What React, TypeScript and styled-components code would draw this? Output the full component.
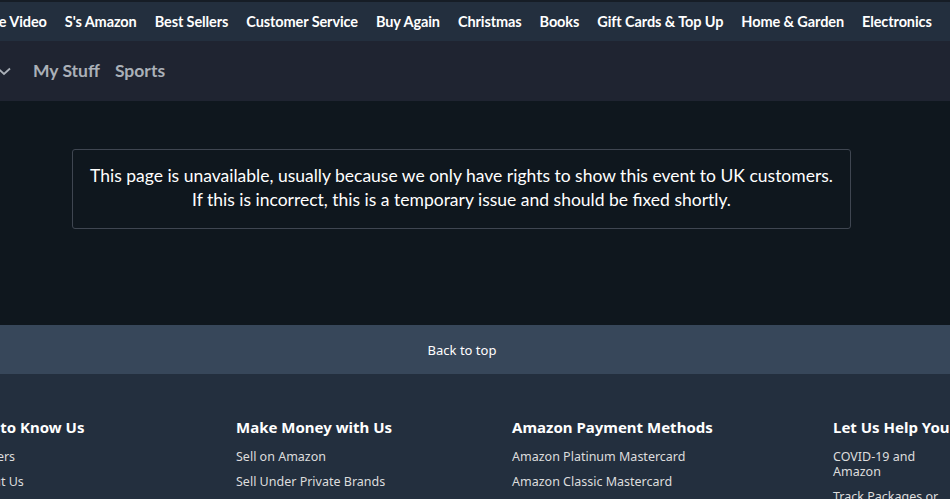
import React from "react";
import styled, { createGlobalStyle } from "styled-components";

const Global = createGlobalStyle`
  html, body { margin: 0; padding: 0; background: #232f3e; overflow: hidden; }
  body { font-family: "Lato", "Liberation Sans", sans-serif; width: 950px; height: 499px; }
`;

const Page = styled.div`
  width: 950px;
  height: 499px;
  overflow: hidden;
  display: flex;
  flex-direction: column;
`;

const TopStripe = styled.div`
  flex: none;
  height: 2px;
  background: #161d26;
`;

const NavBar = styled.nav`
  flex: none;
  height: 39px;
  background: #232f3e;
  display: flex;
  align-items: center;
  gap: 18px;
  margin-left: -31px;
  white-space: nowrap;
`;

const NavLink = styled.a`
  color: #ffffff;
  font-size: 14.5px;
  font-weight: 700;
  letter-spacing: -0.1px;
  text-decoration: none;
`;

const SubNav = styled.div`
  flex: none;
  height: 60px;
  background: #1f2431;
  display: flex;
  align-items: center;
  gap: 15px;
  margin-left: -3px;
  padding-bottom: 1px;
  box-sizing: border-box;
`;

const SubLink = styled.a`
  color: #aab0b8;
  font-size: 17.5px;
  font-weight: 700;
  text-decoration: none;
  display: flex;
  align-items: center;
`;

const Chevron = styled.svg`
  width: 14px;
  height: 14px;
  margin-right: 7px;
`;

const Main = styled.main`
  flex: none;
  height: 224px;
  background: #0f171e;
  display: flex;
  justify-content: center;
  align-items: flex-start;
  padding-top: 48px;
  box-sizing: border-box;
`;

const Notice = styled.div`
  width: 779px;
  height: 80px;
  box-sizing: border-box;
  border: 1px solid #3f4651;
  border-radius: 3px;
  margin-left: -27px;
  color: #ffffff;
  font-size: 17.5px;
  line-height: 24px;
  text-align: center;
  display: flex;
  flex-direction: column;
  justify-content: center;
  padding-bottom: 2px;
`;

const BackToTop = styled.div`
  flex: none;
  height: 49px;
  background: #37475a;
  color: #ffffff;
  font-family: "Noto Sans", "Liberation Sans", sans-serif;
  font-size: 13px;
  display: flex;
  align-items: center;
  justify-content: center;
  padding-right: 26px;
`;

const Footer = styled.footer`
  flex: 1;
  background: #232f3e;
  display: flex;
  align-items: flex-start;
  padding-top: 43px;
  margin-left: -30px;
  font-family: "Noto Sans", "Liberation Sans", sans-serif;
`;

const Column = styled.div<{ $w: number }>`
  width: ${(p) => p.$w}px;
  flex: none;
  display: flex;
  flex-direction: column;
`;

const ColTitle = styled.h3`
  margin: 0 0 12px;
  color: #ffffff;
  font-size: 15px;
  font-weight: 700;
  line-height: 20px;
  white-space: nowrap;
`;

const ColLink = styled.a<{ $narrow?: boolean }>`
  color: #dddddd;
  font-size: 12.5px;
  line-height: 15px;
  margin-bottom: 10px;
  white-space: ${(p) => (p.$narrow ? "normal" : "nowrap")};
  width: ${(p) => (p.$narrow ? "110px" : "auto")};
`;

const navItems = [
  "Prime Video",
  "S's Amazon",
  "Best Sellers",
  "Customer Service",
  "Buy Again",
  "Christmas",
  "Books",
  "Gift Cards & Top Up",
  "Home & Garden",
  "Electronics",
];

export default function App() {
  return (
    <>
      <Global />
      <Page>
        <TopStripe />
        <NavBar>
          {navItems.map((n) => (
            <NavLink key={n}>{n}</NavLink>
          ))}
        </NavBar>
        <SubNav>
          <Chevron viewBox="0 0 14 14" fill="none">
            <path d="M1 4.5 L7 10 L13 4.5" stroke="#aab0b8" strokeWidth="1.8" />
          </Chevron>
          <SubLink>My Stuff</SubLink>
          <SubLink>Sports</SubLink>
        </SubNav>
        <Main>
          <Notice>
            <div>This page is unavailable, usually because we only have rights to show this event to UK customers.</div>
            <div>If this is incorrect, this is a temporary issue and should be fixed shortly.</div>
          </Notice>
        </Main>
        <BackToTop>Back to top</BackToTop>
        <Footer>
          <Column $w={266}>
            <ColTitle>Get to Know Us</ColTitle>
            <ColLink>Careers</ColLink>
            <ColLink>About Us</ColLink>
          </Column>
          <Column $w={276}>
            <ColTitle>Make Money with Us</ColTitle>
            <ColLink>Sell on Amazon</ColLink>
            <ColLink>Sell Under Private Brands</ColLink>
          </Column>
          <Column $w={321}>
            <ColTitle>Amazon Payment Methods</ColTitle>
            <ColLink>Amazon Platinum Mastercard</ColLink>
            <ColLink>Amazon Classic Mastercard</ColLink>
          </Column>
          <Column $w={160}>
            <ColTitle>Let Us Help You</ColTitle>
            <ColLink $narrow>COVID-19 and Amazon</ColLink>
            <ColLink $narrow>Track Packages or View Orders</ColLink>
          </Column>
        </Footer>
      </Page>
    </>
  );
}
